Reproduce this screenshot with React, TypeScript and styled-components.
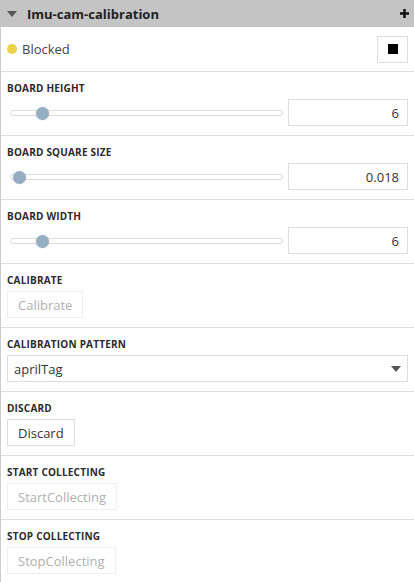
import React from "react";
import styled, { createGlobalStyle } from "styled-components";

const GlobalStyle = createGlobalStyle`
  html, body {
    margin: 0;
    padding: 0;
    background: #ffffff;
    font-family: "Open Sans", "Liberation Sans", sans-serif;
    color: #333333;
  }
  * { box-sizing: border-box; }
`;

const Panel = styled.div`
  width: 414px;
  display: flex;
  flex-direction: column;
`;

const Header = styled.div`
  height: 27px;
  background: #c4c4c4;
  display: flex;
  align-items: center;
  padding: 0 5px 0 7px;
`;

const Caret = styled.span`
  width: 0;
  height: 0;
  border-left: 5px solid transparent;
  border-right: 5px solid transparent;
  border-top: 6px solid #555555;
  margin-right: 10px;
`;

const Title = styled.span`
  font-size: 13px;
  font-weight: 700;
  color: #222222;
  flex: 1;
`;

const PlusIcon = () => (
  <svg width="9" height="9" viewBox="0 0 9 9">
    <path d="M3.25 0h2.5v3.25H9v2.5H5.75V9h-2.5V5.75H0v-2.5h3.25z" fill="#111111" />
  </svg>
);

const Body = styled.div`
  border-left: 1px solid #cccccc;
  display: flex;
  flex-direction: column;
`;

const StatusRow = styled.div`
  height: 45px;
  display: flex;
  align-items: center;
  padding: 0 6px 0 6px;
  border-bottom: 1px solid #dddddd;
`;

const Dot = styled.span`
  width: 10px;
  height: 10px;
  border-radius: 50%;
  background: #ecd247;
  margin-right: 5px;
`;

const StatusText = styled.span`
  font-size: 13px;
  color: #444444;
  flex: 1;
`;

const StopButton = styled.button`
  width: 31px;
  height: 27px;
  border: 1px solid #dddddd;
  background: #ffffff;
  display: flex;
  align-items: center;
  justify-content: center;
  padding: 0;
`;

const StopSquare = styled.span`
  width: 10px;
  height: 10px;
  background: #000000;
`;

const Section = styled.div`
  height: 64px;
  padding: 10px 6px 0 6px;
  border-bottom: 1px solid #dddddd;
  display: flex;
  flex-direction: column;
`;

const Label = styled.div`
  font-size: 10px;
  font-weight: 700;
  line-height: 12px;
  color: #2b2b2b;
  letter-spacing: 0.2px;
  text-transform: uppercase;
  margin-bottom: 5px;
`;

const SliderRow = styled.div`
  display: flex;
  align-items: center;
  gap: 5px;
`;

const SliderArea = styled.div`
  flex: 1;
  height: 27px;
  padding: 1px 0 0 3px;
  display: flex;
  align-items: center;
`;

const Track = styled.div`
  position: relative;
  width: 100%;
  height: 6px;
  border: 1px solid #dcdcdc;
  border-radius: 3px;
  background: #ffffff;
`;

const Thumb = styled.span`
  position: absolute;
  top: 50%;
  width: 13px;
  height: 13px;
  margin: -6.5px 0 0 -6.5px;
  border-radius: 50%;
  background: #94adc3;
  box-shadow: 0 0 2px rgba(0, 0, 0, 0.15);
`;

const NumberBox = styled.input`
  width: 120px;
  height: 27px;
  border: 1px solid #dddddd;
  text-align: right;
  padding: 0 8px;
  font-family: inherit;
  font-size: 13px;
  color: #333333;
  outline: none;
`;

const ActionButton = styled.button<{ $disabled?: boolean }>`
  align-self: flex-start;
  height: 27px;
  padding: 0 10px;
  border: 1px solid ${(p) => (p.$disabled ? "#eeeeee" : "#dddddd")};
  background: #ffffff;
  font-family: inherit;
  font-size: 13px;
  color: ${(p) => (p.$disabled ? "#b0b0b0" : "#333333")};
`;

const Select = styled.div`
  height: 27px;
  border: 1px solid #dddddd;
  display: flex;
  align-items: center;
  padding: 0 6px 0 6px;
  font-size: 13px;
  color: #333333;
`;

const SelectText = styled.span`
  flex: 1;
`;

const SelectArrow = styled.span`
  width: 0;
  height: 0;
  border-left: 5px solid transparent;
  border-right: 5px solid transparent;
  border-top: 6px solid #555555;
`;

type SliderProps = { label: string; value: string; percent: number };

const SliderSection = ({ label, value, percent }: SliderProps) => (
  <Section>
    <Label>{label}</Label>
    <SliderRow>
      <SliderArea>
        <Track>
          <Thumb style={{ left: `${percent}%` }} />
        </Track>
      </SliderArea>
      <NumberBox readOnly value={value} />
    </SliderRow>
  </Section>
);

type ButtonProps = { label: string; text: string; disabled?: boolean };

const ButtonSection = ({ label, text, disabled }: ButtonProps) => (
  <Section>
    <Label>{label}</Label>
    <ActionButton $disabled={disabled}>{text}</ActionButton>
  </Section>
);

export default function App() {
  return (
    <>
      <GlobalStyle />
      <Panel>
        <Header>
          <Caret />
          <Title>Imu-cam-calibration</Title>
          <PlusIcon />
        </Header>
        <Body>
          <StatusRow>
            <Dot />
            <StatusText>Blocked</StatusText>
            <StopButton>
              <StopSquare />
            </StopButton>
          </StatusRow>
          <SliderSection label="Board height" value="6" percent={11.5} />
          <SliderSection label="Board square size" value="0.018" percent={3.3} />
          <SliderSection label="Board width" value="6" percent={11.5} />
          <ButtonSection label="Calibrate" text="Calibrate" disabled />
          <Section>
            <Label>Calibration pattern</Label>
            <Select>
              <SelectText>aprilTag</SelectText>
              <SelectArrow />
            </Select>
          </Section>
          <ButtonSection label="Discard" text="Discard" />
          <ButtonSection label="Start collecting" text="StartCollecting" disabled />
          <ButtonSection label="Stop collecting" text="StopCollecting" disabled />
        </Body>
      </Panel>
    </>
  );
}
